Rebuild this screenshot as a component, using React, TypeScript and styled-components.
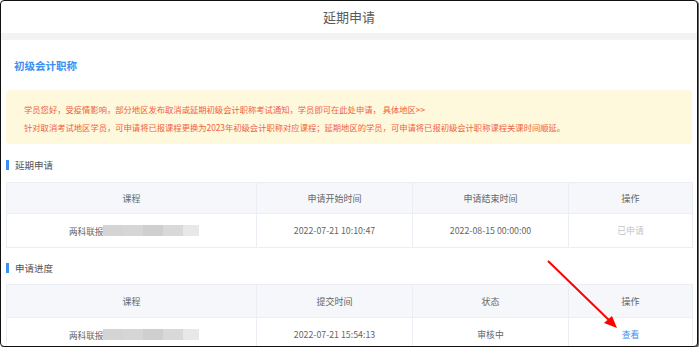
import React from "react";
import styled, { createGlobalStyle } from "styled-components";

const Global = createGlobalStyle`
  html, body { margin: 0; padding: 0; background: #fff; }
  body { font-family: "Noto Sans CJK SC", "Liberation Sans", sans-serif; }
  * { box-sizing: border-box; }
`;

const Frame = styled.div`
  position: relative;
  width: 698px;
  height: 347px;
  border: 1px solid #111;
  border-radius: 4px;
  overflow: hidden;
  background: #fff;
  box-shadow: 1px 1px 0 #666;
`;

const Header = styled.div`
  height: 39px;
  display: flex;
  align-items: center;
  justify-content: center;
  font-size: 13px;
  color: #5a5a5a;
  border-bottom: 7px solid #f2f3f5;
  padding-bottom: 1px;
`;

const Content = styled.div`
  padding: 0 5px;
`;

const CourseTitle = styled.div`
  height: 50px;
  display: flex;
  align-items: center;
  padding-left: 8px;
  font-size: 10.5px;
  font-weight: bold;
  color: #3d8ef2;
`;

const Notice = styled.div`
  height: 54px;
  background: #fef8dd;
  border-radius: 4px;
  padding: 10px 18px 8px;
  font-size: 8.3px;
  line-height: 18px;
  color: #f06240;
`;

const SectionTitle = styled.div<{ $top: number; $bottom: number }>`
  margin-top: ${(p) => p.$top}px;
  margin-bottom: ${(p) => p.$bottom}px;
  height: 14px;
  display: flex;
  align-items: center;
  gap: 6px;
  font-size: 9.5px;
  color: #555;
  &::before {
    content: "";
    width: 3px;
    height: 10px;
    background: #3d8ef2;
  }
`;

const Table = styled.table`
  width: 100%;
  border-collapse: collapse;
  table-layout: fixed;
  font-size: 8.8px;
  color: #666;
`;

const Th = styled.th<{ $h: number }>`
  height: ${(p) => p.$h}px;
  background: #f5f7fa;
  font-weight: normal;
  font-size: 9px;
  color: #666;
  border: 1px solid #ebeef5;
  padding: 0;
  text-align: center;
`;

const Td = styled.td<{ $tone?: "muted" | "link" }>`
  height: 34px;
  border: 1px solid #ebeef5;
  padding: 0;
  text-align: center;
  color: ${(p) => (p.$tone === "muted" ? "#c0c4cc" : p.$tone === "link" ? "#3d8ef2" : "#666")};
`;

const CourseCell = styled.div`
  display: flex;
  align-items: center;
  justify-content: flex-start;
  padding-left: 62px;
  font-size: 8.6px;
`;

const Blur = styled.div`
  display: flex;
  height: 11px;
`;

const BlurSeg = styled.span<{ $c: string; $w: number }>`
  display: block;
  width: ${(p) => p.$w}px;
  height: 11px;
  background: ${(p) => p.$c};
`;

const Arrow = styled.svg`
  position: absolute;
  left: 0;
  top: 0;
  pointer-events: none;
`;

const segs: [string, number][] = [
  ["#d4d4d4", 20],
  ["#d6d6d6", 20],
  ["#cfcfcf", 20],
  ["#d9d9d9", 20],
  ["#e7e8e8", 16],
];

function Course() {
  return (
    <CourseCell>
      <span>两科联报</span>
      <Blur>
        {segs.map(([c, w], i) => (
          <BlurSeg key={i} $c={c} $w={w} />
        ))}
      </Blur>
    </CourseCell>
  );
}

const cols = [250, 156, 156, 124];

function Cols() {
  return (
    <colgroup>
      {cols.map((w, i) => (
        <col key={i} style={{ width: w }} />
      ))}
    </colgroup>
  );
}

export default function App() {
  return (
    <>
      <Global />
      <Frame>
        <Header>延期申请</Header>
        <Content>
          <CourseTitle>初级会计职称</CourseTitle>
          <Notice>
            <div>学员您好，受疫情影响，部分地区发布取消或延期初级会计职称考试通知，学员即可在此处申请， 具体地区&gt;&gt;</div>
            <div>针对取消考试地区学员，可申请将已报课程更换为2023年初级会计职称对应课程；延期地区的学员，可申请将已报初级会计职称课程关课时间顺延。</div>
          </Notice>
          <SectionTitle $top={14} $bottom={10}>延期申请</SectionTitle>
          <Table>
            <Cols />
            <thead>
              <tr>
                <Th $h={31}>课程</Th>
                <Th $h={31}>申请开始时间</Th>
                <Th $h={31}>申请结束时间</Th>
                <Th $h={31}>操作</Th>
              </tr>
            </thead>
            <tbody>
              <tr>
                <Td><Course /></Td>
                <Td>2022-07-21 10:10:47</Td>
                <Td>2022-08-15 00:00:00</Td>
                <Td $tone="muted">已申请</Td>
              </tr>
            </tbody>
          </Table>
          <SectionTitle $top={13} $bottom={9}>申请进度</SectionTitle>
          <Table>
            <Cols />
            <thead>
              <tr>
                <Th $h={33}>课程</Th>
                <Th $h={33}>提交时间</Th>
                <Th $h={33}>状态</Th>
                <Th $h={33}>操作</Th>
              </tr>
            </thead>
            <tbody>
              <tr>
                <Td><Course /></Td>
                <Td>2022-07-21 15:54:13</Td>
                <Td>审核中</Td>
                <Td $tone="link">查看</Td>
              </tr>
            </tbody>
          </Table>
        </Content>
        <Arrow width="698" height="347" viewBox="0 0 698 347">
          <line x1="547" y1="260" x2="610" y2="321" stroke="#f00" strokeWidth="2" />
          <polygon points="616,327 603,322 611,315" fill="#f00" />
        </Arrow>
      </Frame>
    </>
  );
}
